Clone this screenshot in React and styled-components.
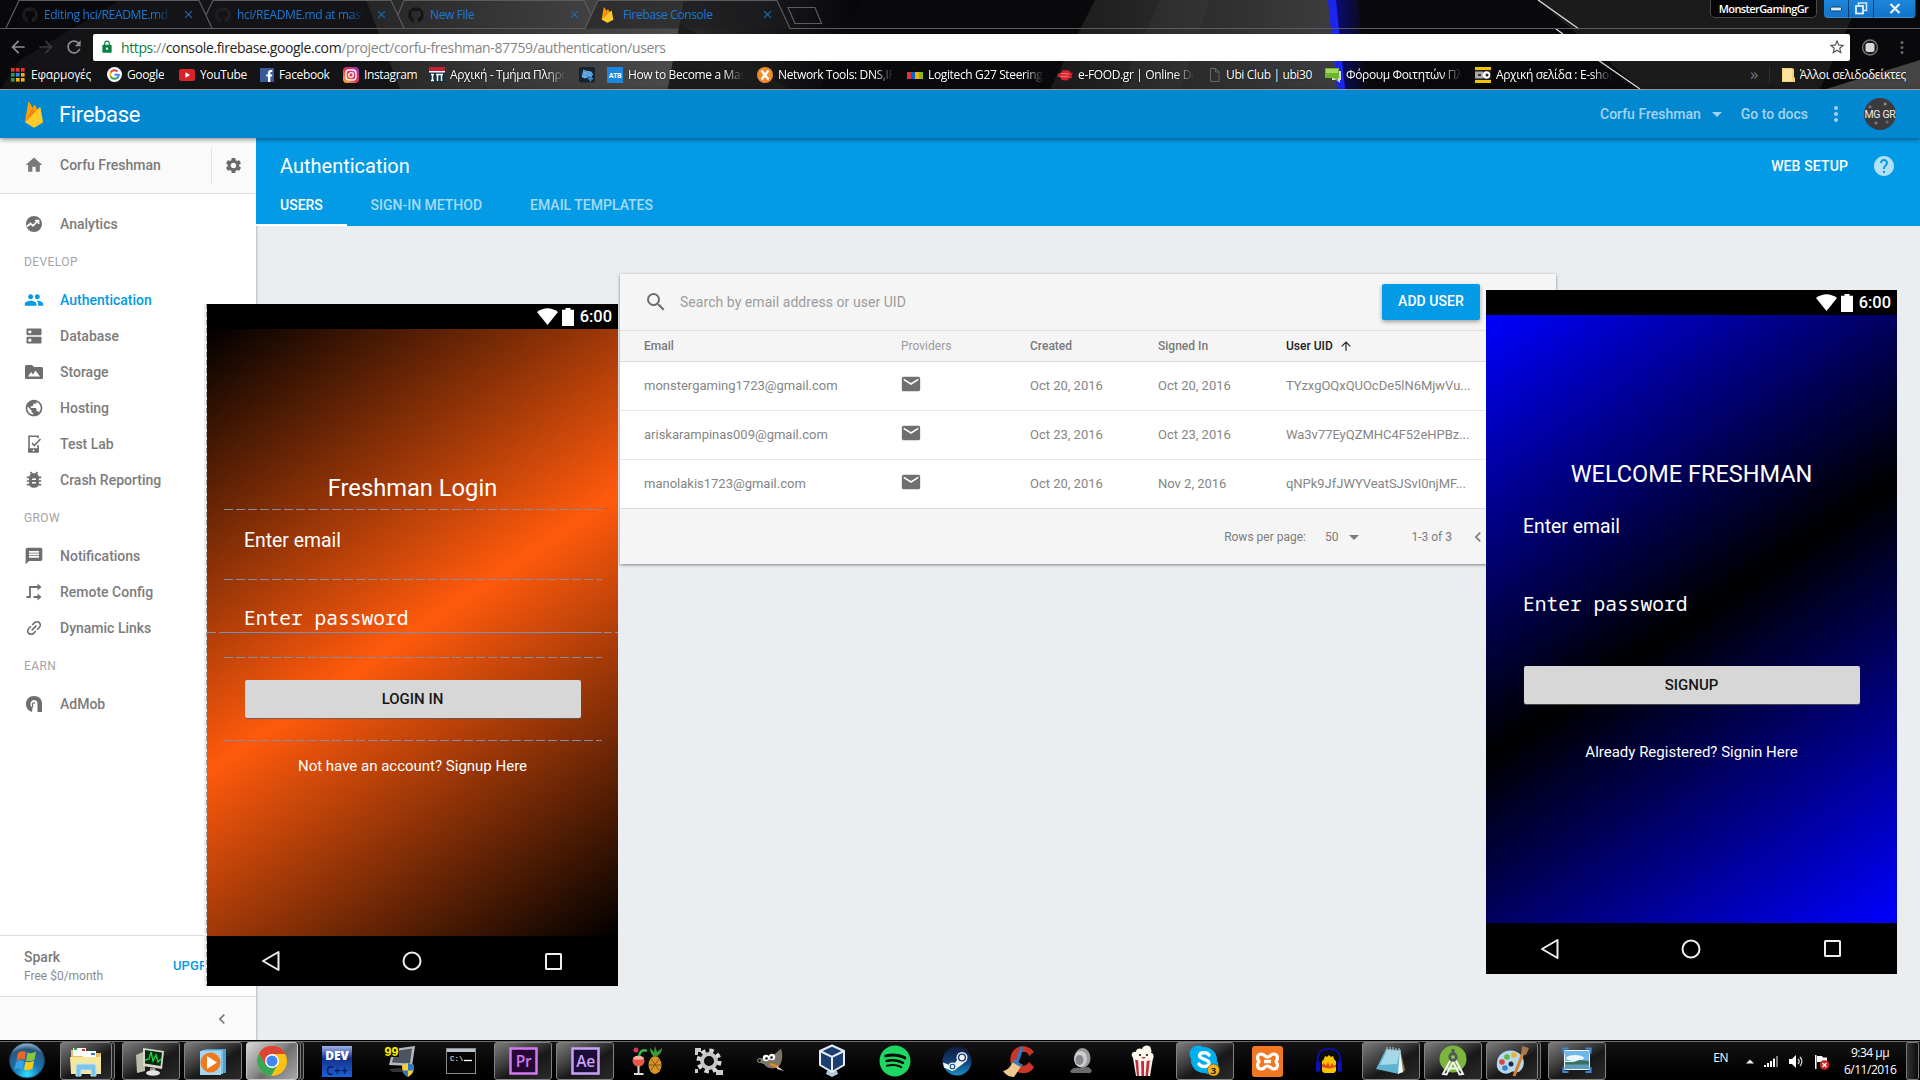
import React from 'react';
import styled, { createGlobalStyle, css } from 'styled-components';
import { FaGithub, FaSpotify } from 'react-icons/fa';
import {
  MdHome, MdSettings, MdPeople, MdDns, MdPublic, MdMessage, MdSearch, MdMail,
  MdHelp, MdArrowUpward, MdMoreVert, MdChevronLeft, MdArrowDropDown, MdStarBorder,
  MdArrowBack, MdArrowForward, MdRefresh, MdLock, MdLink, MdClose,
} from 'react-icons/md';

const GlobalStyle = createGlobalStyle`
  * { box-sizing: border-box; }
  body { margin: 0; background: #000; }
  svg { display: block; flex: none; }
`;

const chromeFont = '"Open Sans", "Noto Sans", sans-serif';

const Desktop = styled.div`
  position: relative;
  width: 1920px;
  height: 1080px;
  overflow: hidden;
  display: flex;
  flex-direction: column;
  font-family: Roboto, sans-serif;
`;

/* ---------- browser chrome ---------- */

const Browser = styled.header`
  position: relative;
  height: 90px;
  flex: none;
  display: flex;
  flex-direction: column;
  background: #09090c;
  border-bottom: 1px solid #b4b0a8;
  font-family: ${chromeFont};
`;
const ThemeArt = styled.svg`
  position: absolute;
  inset: 0;
`;
const TabStrip = styled.div`
  position: relative;
  height: 29px;
  display: flex;
  padding-left: 11px;
`;
const Tab = styled.div`
  width: 193px;
  flex: none;
  display: flex;
  align-items: center;
  padding: 0 9px 0 11px;
`;
const TabTitle = styled.span`
  flex: 1;
  margin-left: 6px;
  overflow: hidden;
  white-space: nowrap;
  font-size: 12px;
  letter-spacing: -0.36px;
  color: #1b78d6;
  ${p => p.$fade && css`
    mask-image: linear-gradient(90deg, #000 88%, transparent);
  `}
`;
const TabClose = styled(MdClose)`
  color: #1c6cb4;
  font-size: 13px;
  margin-left: 11px;
`;
const TabIcon = styled.span`
  width: 16px;
  height: 16px;
  color: ${p => p.$color};
  opacity: ${p => p.$dim ? 0.7 : 1};
`;
const WindowButtons = styled.div`
  margin-left: auto;
  display: flex;
  align-items: flex-start;
  padding-right: 4px;
`;
const ProfileChip = styled.div`
  width: 107px;
  height: 18px;
  margin-right: 7px;
  border: 1px solid #4a4a4c;
  border-top: 0;
  border-radius: 0 0 5px 5px;
  background: #050507;
  color: #fff;
  text-align: center;
  font-size: 11px;
  line-height: 17px;
  font-weight: 600;
  letter-spacing: -0.6px;
`;
const WinButton = styled.div`
  width: ${p => p.$w}px;
  height: 18px;
  display: flex;
  align-items: center;
  justify-content: center;
  background: linear-gradient(#1c86dc, #1274c8);
  border-right: 1px solid #0b3f70;
  border-bottom: 1px solid #3a8fd6;
  border-radius: ${p => p.$radius || 0};
`;
const Toolbar = styled.div`
  position: relative;
  height: 31px;
  display: flex;
  align-items: center;
  padding: 5px 10px 0 8px;
`;
const NavIcon = styled.span`
  width: 28px;
  color: ${p => p.$dim ? '#38383b' : '#8e8e90'};
  font-size: 20px;
`;
const Omnibox = styled.div`
  width: 1758px;
  height: 27px;
  margin-left: 1px;
  display: flex;
  align-items: center;
  padding: 0 4px 0 7px;
  background: #fff;
  border-radius: 2px;
  color: #0b8043;
`;
const Url = styled.span`
  margin-left: 7px;
  font-size: 14px;
  letter-spacing: -0.37px;
  color: #868686;
  white-space: nowrap;
  flex: 1;
`;
const UrlPart = styled.span`
  color: ${p => p.$color};
`;
const BookmarkBar = styled.div`
  position: relative;
  height: 29px;
  flex: none;
  display: flex;
  align-items: center;
  padding: 0 14px 0 10px;
`;
const Bookmark = styled.div`
  width: ${p => p.$w}px;
  display: flex;
  align-items: center;
  gap: 5px;
  color: #fff;
  font-size: 12px;
  letter-spacing: ${p => p.$ls ?? -0.36}px;
  white-space: nowrap;
`;
const BookmarkLabel = styled.span`
  max-width: 117px;
  overflow: hidden;
  text-shadow: 0 0 2px #000;
  ${p => p.$fade && css`
    mask-image: linear-gradient(90deg, #000 82%, transparent 99%);
  `}
`;
const Overflow = styled.span`
  margin-left: auto;
  color: #77777a;
  font-size: 17px;
  line-height: 16px;
  padding-right: 10px;
  padding-bottom: 2px;
`;
const BarDivider = styled.span`
  width: 1px;
  height: 16px;
  background: #333336;
  margin-right: 12px;
`;

/* ---------- firebase console ---------- */

const Console = styled.main`
  height: 950px;
  flex: none;
  display: flex;
  flex-direction: column;
  background: #eaeef1;
`;
const AppBar = styled.div`
  position: relative;
  z-index: 1;
  height: 48px;
  flex: none;
  display: flex;
  align-items: center;
  padding: 0 24px;
  background: #0288d1;
  box-shadow: 0 1px 5px rgba(0, 0, 0, 0.5);
`;
const Brand = styled.div`
  margin-left: 15px;
  font-size: 22px;
  letter-spacing: -0.35px;
  color: #fff;
`;
const AppBarRight = styled.div`
  margin-left: auto;
  display: flex;
  align-items: center;
  color: #a3d3ee;
  font-size: 14px;
  font-weight: 500;
`;
const ProjectMenu = styled.span`
  display: flex;
  align-items: center;
  gap: 4px;
`;
const Docs = styled.span`
  margin: 0 16px 0 12px;
`;
const Avatar = styled.div`
  width: 32px;
  height: 32px;
  margin: 0 0 0 16px;
  border-radius: 50%;
  display: flex;
  align-items: center;
  justify-content: center;
  color: #eee;
  font-size: 10.5px;
  font-weight: 400;
  letter-spacing: -0.3px;
  white-space: nowrap;
  background:
    radial-gradient(circle at 6px 9px, #777 1px, transparent 2px),
    radial-gradient(circle at 21px 6px, #888 1px, transparent 2px),
    radial-gradient(circle at 12px 25px, #777 1px, transparent 2px),
    radial-gradient(circle at 23px 24px, #666 1px, transparent 2px),
    #3b3b3e;
`;
const Body = styled.div`
  flex: 1;
  display: flex;
  min-height: 0;
`;
const Sidebar = styled.nav`
  width: 256px;
  flex: none;
  display: flex;
  flex-direction: column;
  background: #fff;
  box-shadow: 1px 0 2px rgba(0, 0, 0, 0.22);
  color: #7a7a7a;
  font-size: 14px;
`;
const ProjectRow = styled.div`
  height: 56px;
  flex: none;
  display: flex;
  align-items: center;
  padding: 0 0 1px 24px;
  background: #fafafa;
  border-bottom: 1px solid #dcdcdc;
  font-weight: 500;
`;
const ProjectName = styled.span`
  margin-left: 16px;
  flex: 1;
`;
const GearBox = styled.div`
  width: 45px;
  height: 35px;
  border-left: 1px solid #e2e2e2;
  display: flex;
  align-items: center;
  justify-content: center;
  padding-right: 1px;
  color: #6a6a6a;
`;
const NavList = styled.div`
  flex: 1;
  padding-top: 11.5px;
`;
const NavItem = styled.div`
  height: 36px;
  padding-left: 24px;
  display: flex;
  align-items: center;
  gap: 16px;
  font-weight: 500;
  color: ${p => p.$active ? '#039be5' : '#7c7c7c'};
  svg { color: ${p => p.$active ? '#039be5' : '#6e6e6e'}; }
`;
const NavHeading = styled.div`
  height: 40px;
  padding-left: 24px;
  display: flex;
  align-items: center;
  font-size: 12px;
  letter-spacing: 0.4px;
  color: #a4a4a4;
`;
const Plan = styled.div`
  height: 61px;
  border-top: 1px solid #dedede;
  display: flex;
  align-items: center;
  padding: 1px 24px 0 24px;
`;
const PlanInfo = styled.div`
  flex: 1;
  font-weight: 500;
  line-height: 19px;
`;
const PlanPrice = styled.div`
  font-size: 12px;
  font-weight: 400;
  color: #8a8a8a;
`;
const Upgrade = styled.span`
  padding-bottom: 2px;
  font-size: 13px;
  font-weight: 500;
  letter-spacing: 0.1px;
  color: #039be5;
`;
const Collapse = styled.div`
  height: 44px;
  border-top: 1px solid #dedede;
  background: #fafafa;
  display: flex;
  align-items: center;
  justify-content: flex-end;
  padding-right: 24px;
`;
const Content = styled.section`
  flex: 1;
  display: flex;
  flex-direction: column;
`;
const PageHeader = styled.div`
  height: 88px;
  flex: none;
  background: #039be5;
  color: #fff;
  display: flex;
  flex-direction: column;
`;
const TitleRow = styled.div`
  height: 56px;
  display: flex;
  align-items: center;
  padding: 0 24px;
  font-size: 20px;
`;
const WebSetup = styled.span`
  margin: 0 24px 0 auto;
  padding-bottom: 1px;
  font-size: 14px;
  font-weight: 500;
  letter-spacing: 0.13px;
`;
const PageTabs = styled.div`
  flex: 1;
  display: flex;
  font-size: 14px;
  font-weight: 500;
`;
const PageTab = styled.div`
  padding: 3px 24px 0;
  ${p => p.$active && 'width: 90.5px;'}
  line-height: 16px;
  border-bottom: ${p => p.$active ? '2px solid #fff' : '0'};
  color: ${p => p.$active ? '#fff' : '#a5daf5'};
`;
const Card = styled.div`
  width: 936px;
  margin: 48px 0 0 364px;
  background: #f5f5f5;
  box-shadow: 0 1px 3px rgba(0, 0, 0, 0.45);
  font-size: 12px;
  color: #757575;
`;
const SearchRow = styled.div`
  height: 57px;
  display: flex;
  align-items: center;
  padding: 0 76px 0 24px;
  border-bottom: 1px solid #e0e0e0;
  font-size: 14px;
  letter-spacing: 0.05px;
  color: #9c9c9c;
`;
const SearchHint = styled.span`
  margin: -1px 0 0 12px;
  flex: 1;
`;
const AddUser = styled.div`
  width: 98px;
  height: 36px;
  display: flex;
  align-items: center;
  justify-content: center;
  padding-bottom: 2px;
  border-radius: 2px;
  background: #039be5;
  color: #fff;
  font-weight: 500;
  box-shadow: 0 2px 4px rgba(0, 0, 0, 0.35);
`;
const TableRow = styled.div`
  display: grid;
  grid-template-columns: 257px 129px 128px 128px 1fr;
  align-items: center;
  padding: 0 0 ${p => p.$head ? 0 : 2}px 24px;
  height: ${p => p.$head ? 31 : 49}px;
  border-bottom: 1px solid ${p => p.$last || p.$head ? '#dadada' : '#e8e8e8'};
  background: ${p => p.$head ? '#f5f5f5' : '#fff'};
  font-size: ${p => p.$head ? 12 : 13}px;
  font-weight: ${p => p.$head ? 500 : 400};
  color: ${p => p.$head ? '#7a7a7a' : '#858585'};
`;
const Cell = styled.span`
  display: flex;
  align-items: center;
  gap: 6px;
  color: ${p => p.$color || 'inherit'};
  font-weight: ${p => p.$light ? 400 : 'inherit'};
  letter-spacing: ${p => p.$ls || 0}px;
`;
const Pager = styled.div`
  height: 55px;
  display: flex;
  align-items: center;
  justify-content: flex-end;
  padding: 1px 68px 0 0;
  color: #7c7c7c;
`;
const PagerText = styled.span`
  margin-right: ${p => p.$gap}px;
`;
const RowsCaret = styled(MdArrowDropDown)`
  margin-right: 45px;
`;
const MailIcon = styled(MdMail)`
  color: #6f6f6f;
  margin: -2px 0 0 -1px;
`;

/* ---------- phone previews ---------- */

const Phone = styled.div`
  position: absolute;
  left: ${p => p.$x}px;
  top: ${p => p.$y}px;
  z-index: 2;
  width: 411px;
  display: flex;
  flex-direction: column;
  background: #000;
  color: #fff;
  ${p => p.$edge && css`
    &::before {
      content: '';
      position: absolute;
      left: -3px;
      top: 0;
      bottom: 0;
      width: 3px;
      background:
        repeating-linear-gradient(180deg, #9fa5ab 0 5px, transparent 5px 8px) right / 1px 100% no-repeat,
        #eceeef;
    }
  `}
`;
const StatusBar = styled.div`
  height: 25px;
  display: flex;
  align-items: center;
  justify-content: flex-end;
  gap: 4px;
  padding-right: 6px;
  font-size: 16.4px;
  font-weight: 500;
`;
const StatusTime = styled.span`
  margin-left: 2px;
`;
const Screen = styled.div`
  position: relative;
  height: ${p => p.$h}px;
  display: flex;
  flex-direction: column;
  align-items: center;
  padding: 145px 37px 0;
  background: linear-gradient(145.9deg, ${p => p.$colors});
`;
const ScreenTitle = styled.div`
  font-size: ${p => p.$size}px;
  line-height: 28px;
`;
const FieldHint = styled.div`
  align-self: flex-start;
  margin-top: ${p => p.$mt}px;
  font-size: 19.4px;
  line-height: 24px;
  ${p => p.$mono && css`
    font-family: "Noto Sans Mono", "DejaVu Sans Mono", monospace;
    font-size: 19.6px;
  `}
`;
const PhoneButton = styled.div`
  width: 336px;
  height: 38px;
  margin-top: 50px;
  display: flex;
  align-items: center;
  justify-content: center;
  border-radius: 2px;
  background: #d6d7d6;
  box-shadow: 0 1px 1px rgba(90, 90, 90, 0.8);
  color: #161616;
  font-size: 15px;
  font-weight: 500;
`;
const PhoneLink = styled.div`
  margin-top: 38px;
  font-size: 15px;
  line-height: 20px;
`;
const Guide = styled.div`
  position: absolute;
  left: ${p => p.$full ? 0 : 17}px;
  right: ${p => p.$full ? 0 : 16}px;
  top: ${p => p.$y}px;
  height: 1px;
  background: ${p => p.$full
    ? 'linear-gradient(90deg, #7d93ab 9px, transparent 9px 12px, #6f93bb 12px 395px, transparent 395px 397px, #7d93ab 397px 405px, transparent 405px 408px, #7d93ab 408px)'
    : 'repeating-linear-gradient(90deg, #8a8c98 0 9px, transparent 9px 12px)'};
`;
const AndroidNav = styled.div`
  height: ${p => p.$h}px;
  display: flex;
  align-items: center;
  justify-content: space-between;
  padding: 0 55px 0 54px;
`;

/* ---------- taskbar ---------- */

const Taskbar = styled.footer`
  height: 40px;
  flex: none;
  display: flex;
  padding: 0 1px 0 0;
  background: linear-gradient(#141416, #030303 70%, #000);
  border-top: 1px solid #000;
  box-shadow: inset 0 1px 0 #6c6c6c;
  color: #fff;
  font-family: ${chromeFont};
`;
const StartArea = styled.div`
  width: 60px;
  display: flex;
  align-items: center;
  padding-left: 8px;
`;
const Slot = styled.div`
  width: 62px;
  display: flex;
  padding-top: 1px;
`;
const TaskButton = styled.div`
  width: ${p => p.$stack ? 52 : 58}px;
  height: 38px;
  display: flex;
  align-items: center;
  justify-content: center;
  ${p => p.$open && css`
    border: 1px solid ${p.$active ? '#c9c9c9' : '#828282'};
    border-radius: 3px;
    background: ${p.$active
      ? 'linear-gradient(135deg, #d8d8d8, #8a8a8a 45%, #6f6f6f 55%, #a8a8a8)'
      : 'linear-gradient(150deg, #7c7c7c 0%, #3d3d3d 38%, #181818 58%, #2a2a2a 100%)'};
  `}
`;
const StackEdge = styled.div`
  width: 3px;
  height: 38px;
  border: 1px solid #777;
  border-left: 0;
  border-radius: 0 3px 3px 0;
  background: #222;
`;
const Tray = styled.div`
  margin-left: auto;
  display: flex;
  align-items: center;
  font-size: 12px;
  letter-spacing: -0.5px;
`;
const Lang = styled.span`
  margin: -6px 18px 0 0;
`;
const TrayIcons = styled.span`
  display: flex;
  align-items: center;
  gap: 10px;
  padding-top: 2px;
`;
const Clock = styled.div`
  width: 52px;
  margin: 1px 10px 0 14px;
  text-align: center;
  line-height: 17px;
  white-space: nowrap;
`;
const ShowDesktop = styled.div`
  width: 13px;
  height: 38px;
  margin-top: 1px;
  border: 1px solid #777;
  border-radius: 2px;
  background: linear-gradient(90deg, #333, #0c0c0c);
`;

/* ---------- drawings ---------- */

const Flame = ({ w, h }) => (
  <svg width={w} height={h} viewBox="0 0 20 27" preserveAspectRatio="none">
    <path d="M1 21 4.2 1.2c.1-.6.8-.7 1.1-.2L8.600 7 10 4.300c.3-.5 1-.5 1.200 0L19 21z" fill="#ffa000" />
    <path d="M12 13 8.600 7 1 21z" fill="#f57f17" />
    <path d="M19 21.500 16.600 6.800c-.1-.5-.7-.7-1.100-.3L1 21.200l8 5c.6.400 1.400.400 2 0z" fill="#ffca28" />
  </svg>
);

const GoogleG = () => (
  <svg width="15" height="15" viewBox="0 0 30 30">
    <circle cx="15" cy="15" r="15" fill="#fff" />
    <g fill="none" strokeWidth="4">
      <path d="M21 9a8.500 8.500 0 0 0-13.600 2" stroke="#ea4335" />
      <path d="M7.400 11a9 9 0 0 0 0 8" stroke="#fbbc05" />
      <path d="M7.400 19a8.500 8.500 0 0 0 13.200 2.500" stroke="#34a853" />
      <path d="M15 15.500h8.500c0 3-1 4.800-2.900 6.300" stroke="#4285f4" />
    </g>
  </svg>
);

const bookmarkIcons = {
  apps: (
    <svg width="16" height="14" viewBox="0 0 16 14">
      {['#e33', '#e33', '#e33', '#2b9a4b', '#3b86f0', '#f5b400', '#2b9a4b', '#f5b400', '#f5b400'].map((c, i) => (
        <rect key={i} x={1 + (i % 3) * 5} y={Math.floor(i / 3) * 5} width="3.600" height="3.600" fill={c} />
      ))}
    </svg>
  ),
  google: <GoogleG />,
  youtube: (
    <svg width="16" height="14" viewBox="0 0 16 14"><rect y="1" width="16" height="12" rx="2.500" fill="#d8232a" /><path d="M6.500 4.300v5.400L11 7z" fill="#fff" /></svg>
  ),
  facebook: (
    <svg width="14" height="14" viewBox="0 0 14 14"><rect width="14" height="14" fill="#3b5998" /><path d="M8 14V8.500H6.200V6.400H8V5c0-2 1-3 2.800-3h1.500v2.100h-1c-.8 0-1 .4-1 1.100v1.200h2l-.3 2.100h-1.700V14z" fill="#fff" /></svg>
  ),
  instagram: (
    <svg width="16" height="16" viewBox="0 0 16 16">
      <defs><linearGradient id="ig" x1="0" y1="1" x2="1" y2="0"><stop offset="0" stopColor="#fdc042" /><stop offset=".5" stopColor="#e5304f" /><stop offset="1" stopColor="#8b3bc4" /></linearGradient></defs>
      <rect width="16" height="16" rx="4" fill="url(#ig)" />
      <rect x="3" y="3" width="10" height="10" rx="3" fill="none" stroke="#fff" strokeWidth="1.300" />
      <circle cx="8" cy="8" r="2.300" fill="none" stroke="#fff" strokeWidth="1.300" /><circle cx="11" cy="5" r=".7" fill="#fff" />
    </svg>
  ),
  dept: (
    <svg width="16" height="15" viewBox="0 0 16 15"><rect width="16" height="15" fill="#123243" /><rect width="16" height="4" fill="#c62033" /><rect y="4" width="16" height="1.500" fill="#fff" /><path d="M2 7.500h3M2 13.500h3M3.500 7v7M7 7.500h7M8.500 7.500V14M12.500 7.500V14" stroke="#fff" strokeWidth="1.500" /></svg>
  ),
  cube: (
    <svg width="16" height="16" viewBox="0 0 16 16"><rect width="16" height="15.500" rx="2" fill="#16222c" /><path d="M4.500 2.500l3 1.200 4.500.8 2 2.500-1.500 3.500-2.500-.5-4 1.500-3.500-1.500 1-3.500z" fill="#69aee6" /><path d="M2.500 6.500l9 3.500M4 3l9 5" stroke="#3c7fb8" strokeWidth=".8" /><path d="M11.500 9v5.500M8.800 11.800h5.400" stroke="#3f92d8" strokeWidth="1.600" /></svg>
  ),
  atb: (
    <svg width="16" height="16" viewBox="0 0 16 16"><rect width="16" height="16" fill="#1a86de" /><text x="8" y="10.800" textAnchor="middle" fontFamily="Open Sans" fontWeight="700" fontSize="7" fill="#fff" letterSpacing="-.3">ATB</text></svg>
  ),
  network: (
    <svg width="16" height="16" viewBox="0 0 16 16"><circle cx="8" cy="8" r="8" fill="#f08c28" /><path d="M4.500 3.500l7 9M11.500 3.500l-7 9" stroke="#fff" strokeWidth="2.400" /></svg>
  ),
  logitech: (
    <svg width="16" height="16" viewBox="0 0 16 16"><path d="M4.500 4a3 3 0 0 1 6 0" stroke="#111" fill="none" strokeWidth="1.500" /><rect y="5" width="4" height="7" fill="#e53238" /><rect x="4" y="5" width="4" height="7" fill="#0064d2" /><rect x="8" y="5" width="4" height="7" fill="#f5af02" /><rect x="12" y="5" width="4" height="7" fill="#86b817" /></svg>
  ),
  efood: (
    <svg width="16" height="16" viewBox="0 0 16 16"><path d="M0 9l2-3 1.500.5L6 3l6 .5 2 2.500 2-.5-1.500 3L15 11l-3 .5-2 2-5-.5-2-2.500z" fill="#d8232f" /><path d="M4 6.500l8 .5M3.500 9.500l8 .3" stroke="#f08a90" strokeWidth=".9" /></svg>
  ),
  page: (
    <svg width="12" height="14" viewBox="0 0 12 14"><path d="M1.500.5h5l3.500 3.500v9.500h-8.500zM6.500.5v3.500H10" fill="none" stroke="#666" /></svg>
  ),
  forum: (
    <svg width="16" height="16" viewBox="0 0 16 16"><path d="M7 4h9v9h-1v3l-3-3H7z" fill="#d8d8d0" /><path d="M0 1h14v10H13v4l-4-4H0z" fill="#6eb52c" /><path d="M1 2h12v4H1z" fill="#a4d862" /></svg>
  ),
  eshop: (
    <svg width="16" height="16" viewBox="0 0 16 16"><rect width="16" height="3" fill="#f2c500" /><rect y="13" width="16" height="3" fill="#f2c500" /><rect y="3" width="16" height="10" fill="#222" /><path d="M0 4.500h8v7H0z" fill="#a8a8a8" /><path d="M3 7h3v2H3z" fill="#333" /><circle cx="11.500" cy="8" r="3.800" fill="#fff" /><circle cx="12" cy="8" r="1.500" fill="#222" /></svg>
  ),
  folder: (
    <svg width="13" height="15" viewBox="0 0 13 15"><path d="M0 1h10l2 1v8l1 1v4H0z" fill="#f4d27a" /><path d="M1 2h9v12H1z" fill="#fbe39b" /></svg>
  ),
};

const bookmarks = [
  ['apps', 'Εφαρμογές', 97, 0, -0.22], ['google', 'Google', 72], ['youtube', 'YouTube', 81], ['facebook', 'Facebook', 83],
  ['instagram', 'Instagram', 86], ['dept', 'Αρχική - Τμήμα Πληροφορικής', 150, 1], ['cube', '', 28],
  ['atb', 'How to Become a Master', 150, 1], ['network', 'Network Tools: DNS,IP,Email', 150, 1],
  ['logitech', 'Logitech G27 Steering Wheel', 150, 1], ['efood', 'e-FOOD.gr | Online Delivery', 152, 1],
  ['page', 'Ubi Club | ubi30', 116], ['forum', 'Φόρουμ Φοιτητών Πληροφ.', 150, 1], ['eshop', 'Αρχική σελίδα : E-shop.gr', 150, 1],
];

const AnalyticsIcon = () => (
  <svg width="20" height="20" viewBox="0 0 20 20"><circle cx="10" cy="10" r="8" fill="currentColor" /><path d="M3 12.500l3.500-3 2.500 2.300L13.500 7M11 6.500h3.500V10" fill="none" stroke="#fff" strokeWidth="1.700" /></svg>
);
const StorageIcon = () => (
  <svg width="20" height="20" viewBox="0 0 20 20"><path d="M2.600 3H8l2 2h7.400c.9 0 1.600.7 1.600 1.600v8.800c0 .9-.7 1.600-1.600 1.600H2.600C1.700 17 1 16.300 1 15.400V4.600C1 3.700 1.700 3 2.600 3z" fill="currentColor" /><path d="M4 14.500l3-4.500 2 2.500 2.500-4 4.500 6z" fill="#fff" /></svg>
);
const TestLabIcon = () => (
  <svg width="20" height="20" viewBox="0 0 20 20" fill="none" stroke="currentColor" strokeWidth="1.600"><path d="M14 4V2.300H5V17h9v-6" /><path d="M5 15h9v3H5z" fill="currentColor" /><path d="M8 9l2.300 2.500L16.500 5" /><circle cx="9.500" cy="16.500" r=".9" fill="#fff" stroke="none" /></svg>
);
const CrashIcon = () => (
  <svg width="20" height="20" viewBox="0 0 20 20" fill="none" stroke="currentColor" strokeWidth="1.700"><path d="M6 7.500c0-2.500 1.500-3.500 4-3.500s4 1 4 3.500V13c0 2.500-1.500 4-4 4s-4-1.500-4-4z" fill="currentColor" /><path d="M2.800 7.300h14.400M2.800 11h14.400M2.800 14.700h14.400M6.500 2l2 2.300M13.500 2l-2 2.300" /><path d="M8 9.200h4M8 12.700h4" stroke="#fff" strokeWidth="1.400" /></svg>
);
const RemoteIcon = () => (
  <svg width="20" height="20" viewBox="0 0 20 20"><path d="M2.500 15H6V5h9M9.500 15H15" fill="none" stroke="currentColor" strokeWidth="1.800" /><path d="M13.500 1.500 17.500 5l-4 3.500zM13.500 11.500l4 3.500-4 3.500z" fill="currentColor" /></svg>
);
const LinksIcon = styled(MdLink)`
  transform: rotate(-45deg);
`;
const AdmobIcon = () => (
  <svg width="20" height="20" viewBox="0 0 20 20"><path d="M10 2c4.800 0 8 3 8 7.500V18h-4.500v-8c0-2.500-1.200-4-3.300-4C7.800 6 6.500 7.800 6.500 10c0 1.800.8 3 2 3.700L8 17.800C4.300 17 2 14 2 10c0-4.700 3.300-8 8-8z" fill="currentColor" /><path d="M8.500 13.500V10c0-1.600 2.200-1.600 2.200-.2" fill="none" stroke="currentColor" strokeWidth="1.200" /></svg>
);

const sections = [
  { items: [['Analytics', <AnalyticsIcon />]] },
  {
    title: 'DEVELOP',
    items: [
      ['Authentication', <MdPeople size={20} />, true], ['Database', <MdDns size={20} />], ['Storage', <StorageIcon />],
      ['Hosting', <MdPublic size={20} />], ['Test Lab', <TestLabIcon />], ['Crash Reporting', <CrashIcon />],
    ],
  },
  { title: 'GROW', items: [['Notifications', <MdMessage size={20} />], ['Remote Config', <RemoteIcon />], ['Dynamic Links', <LinksIcon size={20} />]] },
  { title: 'EARN', items: [['AdMob', <AdmobIcon />]] },
];

const users = [
  ['monstergaming1723@gmail.com', 'Oct 20, 2016', 'Oct 20, 2016', 'TYzxgOQxQUOcDe5lN6MjwVu...'],
  ['ariskarampinas009@gmail.com', 'Oct 23, 2016', 'Oct 23, 2016', 'Wa3v77EyQZMHC4F52eHPBz...'],
  ['manolakis1723@gmail.com', 'Oct 20, 2016', 'Nov 2, 2016', 'qNPk9JfJWYVeatSJSvI0njMF...'],
];

const AdobeIcon = ({ label, color, bg }) => (
  <svg width="29" height="28" viewBox="0 0 29 28"><rect x="1.500" y="1.500" width="26" height="25" fill={bg} stroke={color} strokeWidth="2.500" /><text x="14.500" y="19.500" textAnchor="middle" fontFamily="Open Sans" fontWeight="600" fontSize="15.500" letterSpacing="-.4" fill={color}>{label}</text></svg>
);

const taskIcons = {
  explorer: <svg width="34" height="32" viewBox="0 0 34 32"><path d="M2 5h8l2 3h20v21H2z" fill="#dfc267" /><path d="M4 3h13v8H4zM14 6h13v7H14z" fill="#fff" /><path d="M5 3h3v2H5z" fill="#2aa84a" /><path d="M13 4h3v2h-3z" fill="#d33" /><path d="M22 8h4v2h-4z" fill="#2e78d0" /><path d="M1 12h29l2-2v19H2z" fill="#f5e7a0" /><path d="M7 31V22c0-2 1-3 3-3h14c2 0 3 1 3 3v9h-5v-6H12v6z" fill="#7cc4ea" stroke="#bfe5f8" /></svg>,
  monitor: <svg width="34" height="32" viewBox="0 0 34 32"><path d="M2 10l9-4v20l-8 2z" fill="#bcbcae" /><path d="M9 3l21 3-2 18-19-3z" fill="#d8d8cc" /><path d="M11 5l17 2.500-1.500 13.500-15.500-2.500z" fill="#062a0c" /><path d="M11 15l4-1 2-7 2 9 3-6 2 7 3-3" fill="none" stroke="#20d040" strokeWidth="1.400" /><path d="M16 23h5l1 4h-6z" fill="#999" /><ellipse cx="19" cy="28" rx="7" ry="2.800" fill="#e4e4e4" /></svg>,
  wmp: <svg width="30" height="30" viewBox="0 0 30 30"><rect x="7" y="3" width="21" height="24" fill="#4e9fd0" /><rect x="4" y="4" width="21" height="24" fill="#7fc0e6" /><rect x="2" y="5" width="21" height="24" fill="#a9d6ef" /><circle cx="12.500" cy="16.500" r="10" fill="#ee7a1c" /><path d="M9 10v13l10-6.500z" fill="#fff" /></svg>,
  chrome: <svg width="30" height="30" viewBox="0 0 30 30"><circle cx="15" cy="15" r="15" fill="#fbc116" /><path d="M2 7.500A15 15 0 0 1 28 7.500H15z" fill="#db4437" /><path d="M2 7.500A15 15 0 0 0 14 30l7-11.500-12.500-.500z" fill="#3aa757" /><path d="M15 8h13.200A15 15 0 0 0 2 7.500L8.500 19z" fill="#db4437" /><circle cx="15" cy="15" r="7" fill="#fff" /><circle cx="15" cy="15" r="5.500" fill="#4285f4" /></svg>,
  dev: <svg width="30" height="31" viewBox="0 0 30 31"><defs><linearGradient id="dv" x1="0" y1="0" x2="0" y2="1"><stop offset="0" stopColor="#9fb4ea" /><stop offset=".4" stopColor="#15308c" /><stop offset="1" stopColor="#1e62d8" /></linearGradient></defs><rect width="30" height="31" fill="url(#dv)" /><text x="15" y="14" textAnchor="middle" fontFamily="Open Sans" fontWeight="800" fontSize="12" fill="#fff">DEV</text><text x="15" y="28.500" textAnchor="middle" fontFamily="Open Sans" fontWeight="600" fontSize="12.500" fill="#041a5c">C++</text></svg>,
  counter: <svg width="34" height="34" viewBox="0 0 34 34"><path d="M11 5l22-3-3 20-23-1z" fill="#b5b9bd" /><path d="M13 7l17-2.500-2 15-18-1z" fill="#4b5560" /><rect x="2" y="2" width="15" height="11" fill="#161600" /><text x="9.500" y="12" textAnchor="middle" fontFamily="Liberation Sans" fontWeight="700" fontSize="12.500" fill="#ffee00">99</text><path d="M7 25l12-1 2 4H10z" fill="#333" /><path d="M20 21l6-2 6 2c0 6-1 9-6 12-5-3-6-6-6-12z" fill="#f4cf3a" /><path d="M26 19l6 2c0 2 0 4-.6 5.500H26zM20.600 26.500H26V33c-3.500-2-5-4-5.400-6.500z" fill="#2e78c8" /></svg>,
  cmd: <svg width="30" height="26" viewBox="0 0 30 26"><rect x=".5" y=".5" width="29" height="25" fill="#050505" stroke="#8c8c8c" /><rect x="1" y="1" width="28" height="3" fill="#b8c4d0" /><text x="4" y="13" fontFamily="Liberation Mono" fontSize="7.500" fill="#fff">C:\</text><path d="M18 12.500h8" stroke="#fff" strokeWidth="1.300" /></svg>,
  pr: <AdobeIcon label="Pr" color="#d47af0" bg="#260633" />,
  ae: <AdobeIcon label="Ae" color="#c9a2f5" bg="#1b0d38" />,
  drink: <svg width="32" height="32" viewBox="0 0 32 32"><ellipse cx="7.500" cy="16" rx="6" ry="5.500" fill="#e9564a" /><path d="M2 13c3-3 8-3 11 0l-1 1.500H3z" fill="#f7b0a0" /><path d="M6.500 21h2v7h4v2H3v-2h3.500z" fill="#ddd" /><circle cx="5" cy="5" r="2.500" fill="#d8355a" /><path d="M8 11c1-5 4-7 8-5" stroke="#39b54a" strokeWidth="2.500" fill="none" /><ellipse cx="24" cy="20" rx="6.500" ry="9" fill="#d8952a" /><path d="M20 14l8 11M28 14l-8 11M18 20h12" stroke="#8d5310" /><path d="M24 12c-4-2-5-6-5-9l4 4 1-6 2 6 5-4c0 4-2 7-7 9z" fill="#3c9b37" /></svg>,
  gear: <svg width="28" height="28" viewBox="0 0 28 28"><path d="M0 1h6v4H0zM0 5h3v3H0zM21 23h7v5h-7zM0 22h3v4H0z" fill="#ccc" /><circle cx="14" cy="14" r="10" fill="none" stroke="#d9d9d9" strokeWidth="5" strokeDasharray="4.200 3.650" /><circle cx="14" cy="14" r="7" fill="none" stroke="#c6c6c6" strokeWidth="4" /><circle cx="14" cy="14" r="3.500" fill="#111" /></svg>,
  gimp: <svg width="30" height="26" viewBox="0 0 30 26"><path d="M3 11c5-1 7-4 10-3 5 1 7-4 12-7 2 4 2 14-3 18-5 3-12 1-14-3-2 0-5-2-5-5z" fill="#7b7568" /><circle cx="10" cy="10" r="3.200" fill="#fff" /><circle cx="16" cy="9" r="3.200" fill="#fff" /><circle cx="10.500" cy="10.500" r="1.300" fill="#111" /><circle cx="15.500" cy="9.500" r="1.300" fill="#111" /><circle cx="3.500" cy="12.500" r="2" fill="#111" stroke="#ccc" strokeWidth=".7" /><path d="M14 16l8 3" stroke="#e08a2a" strokeWidth="2.500" /><path d="M21 18l7 5-7-2z" fill="#ddd" /></svg>,
  vbox: <svg width="30" height="34" viewBox="0 0 30 34"><path d="M9 27h10l1 3-6 3-6-3z" fill="#b9c6dc" /><path d="M14 1.500l12 5.500v14L14 28 2 21V7z" fill="#1c3f72" stroke="#e4ecf8" strokeWidth="2" strokeLinejoin="round" /><path d="M2 7l12 6 12-6M14 13v14" stroke="#e4ecf8" strokeWidth="2" fill="none" /></svg>,
  spotify: <FaSpotify size={32} color="#1ed760" />,
  steam: <svg width="30" height="30" viewBox="0 0 30 30"><defs><linearGradient id="stm" x1="0" y1="0" x2="0" y2="1"><stop offset="0" stopColor="#101c3c" /><stop offset=".5" stopColor="#123a70" /><stop offset="1" stopColor="#1b8ec8" /></linearGradient></defs><circle cx="15" cy="15" r="14.500" fill="url(#stm)" /><path d="M1 16.500l9 3.500 7-8 5 5-8 6-4 2-8-3.500z" fill="#f2f5f8" /><circle cx="10.500" cy="20.500" r="4" fill="#f2f5f8" /><circle cx="10.500" cy="20.500" r="2.300" fill="none" stroke="#1a4f88" strokeWidth="1.100" /><circle cx="20" cy="11.500" r="5.500" fill="#f2f5f8" /><circle cx="20" cy="11.500" r="3.400" fill="#f2f5f8" stroke="#15396e" strokeWidth="1.400" /></svg>,
  ccleaner: <svg width="32" height="34" viewBox="0 0 32 34"><path d="M31 8C25 0 12 0 8 11c-3 10 4 19 13 18 4 0 8-2 10-6l-5-5c-3 5-9 5-11 0-2-6 2-11 7-10 2 0 3 1 4 4z" fill="#cf3527" /><path d="M19 3l-5 15" stroke="#3678b8" strokeWidth="3.500" /><path d="M11 16l8 5-8 12c-5 0-9-3-11-6 5-1 8-5 11-11z" fill="#eec88c" /><path d="M10 17l9 5" stroke="#3678b8" strokeWidth="3" /></svg>,
  webcam: <svg width="26" height="28" viewBox="0 0 26 28"><path d="M2 25c1-4 6-5 10-4l8-1c4 2 5 5 2 6H4z" fill="#6c6c6e" /><ellipse cx="14.500" cy="11" rx="8" ry="10" fill="#9b9b9e" /><ellipse cx="12.500" cy="12" rx="6.500" ry="8" fill="#cdcdcf" /><ellipse cx="11.500" cy="13" rx="4" ry="5" fill="#88888c" /></svg>,
  popcorn: <svg width="26" height="32" viewBox="0 0 26 32"><path d="M3 13h20l-3 18H6z" fill="#f4f0ea" /><path d="M5 13h3l1 18H7zM11 13h3v18h-2.500zM17 13h3l-2 18h-2.500z" fill="#c22d3a" /><path d="M3 13c-3-4 0-7 3-6 0-4 4-4 6-3 1-4 8-5 9 0 1 3 0 4 0 4 3 0 3 4 2 6-4 3-16 3-20-1z" fill="#fff8ea" /><circle cx="10" cy="10" r="1.100" fill="#111" /><circle cx="17" cy="10" r="1.100" fill="#111" /><path d="M11.500 12c1 2 3.500 2 4 0z" fill="#c22d3a" /></svg>,
  skype: <svg width="32" height="32" viewBox="0 0 32 32"><circle cx="9" cy="9" r="8.500" fill="#00aff0" /><circle cx="15" cy="15" r="13" fill="#00aff0" /><circle cx="21" cy="21" r="8.500" fill="#00aff0" /><path d="M20 10c-2-3-9-3-9.500.5C10 15 20.500 13 20 18.500c-.5 4-8 4-10 .5" fill="none" stroke="#fff" strokeWidth="3.400" strokeLinecap="round" /><circle cx="24.500" cy="25" r="6" fill="#f5b21c" stroke="#6b4a00" strokeWidth=".6" /><text x="24.500" y="28.500" textAnchor="middle" fontFamily="Open Sans" fontWeight="700" fontSize="9.500" fill="#222">3</text></svg>,
  xampp: <svg width="31" height="31" viewBox="0 0 31 31"><rect width="31" height="31" rx="3" fill="#f37623" /><path d="M9.500 8c3 0 3 3 6 3s3-3 6-3 4 2 4 4-1.500 3-1.500 3.500S25.500 17 25.500 19s-1 4-4 4-3-3-6-3-3 3-6 3-4-2-4-4 1.500-3 1.500-3.500S5.500 14 5.500 12s1-4 4-4z" fill="none" stroke="#fff" strokeWidth="3.200" /><path d="M12 15.500h7" stroke="#fff" strokeWidth="3.500" /></svg>,
  audacity: <svg width="28" height="28" viewBox="0 0 28 28"><path d="M3 17C1 4 8 2 14 2s13 2 11 15" fill="none" stroke="#0c10a8" strokeWidth="2" /><path d="M7 14l1.500-1 1.500-4 2 1 2-2 2 2 2-1 1.500 4 1.500 1v10l-2 2H9l-2-2z" fill="#f7c500" /><path d="M7 18l2-2 2 3 2-4 2 5 2-4 2 3 2-2v3l-7 1.500-7-1.500z" fill="#e8431c" /><rect x="1" y="14" width="4.500" height="11" rx="2.200" fill="#0c10b8" /><rect x="22.500" y="14" width="4.500" height="11" rx="2.200" fill="#0c10b8" /></svg>,
  notepad: <svg width="32" height="32" viewBox="0 0 32 32"><path d="M25 4l5 21-3 3-5-22z" fill="#9c7c3a" /><path d="M11 4l15 1-2 24L1 24z" fill="#5fb3cf" /><path d="M12 5l13 1-3 13-17 1z" fill="#a5d9e8" /><path d="M25 5l3 22-5 2z" fill="#eef6fa" /><path d="M12 2v4M15 2v4M18 2v4M21 3v4M24 3v4" stroke="#ccc" /></svg>,
  android: <svg width="28" height="32" viewBox="0 0 28 32"><circle cx="14" cy="14" r="13.500" fill="#7cb63c" /><path d="M12 14L4 29l3.500.500L14 17l6.500 12.500L24 29l-8-15M8.500 23.500h11" fill="none" stroke="#f2f2f2" strokeWidth="2" /><circle cx="14" cy="12" r="4.700" fill="#4f5b56" /><path d="M12.500 4h3v6h-3z" fill="#4f5b56" /><circle cx="14" cy="12" r="1.800" fill="#9ccc65" /></svg>,
  paint: <svg width="34" height="32" viewBox="0 0 34 32"><path d="M2 17C3 8 13 3 22 7c8 4 9 14 3 19-3 3-6-1-9 1-4 4-16 1-14-10z" fill="#b6d9ee" /><circle cx="7" cy="17" r="2.800" fill="#d9443c" /><circle cx="12" cy="12" r="2.800" fill="#63b548" /><circle cx="19" cy="10" r="2.800" fill="#eab22c" /><circle cx="10" cy="23" r="2.800" fill="#3c7fd0" /><circle cx="16" cy="19" r="2.500" fill="#1c2c3c" /><path d="M19 31L28 8" stroke="#d9822b" strokeWidth="3" /><path d="M26 9l1-8 7 2-3 7z" fill="#a8764c" /></svg>,
  picture: <svg width="30" height="28" viewBox="0 0 30 28"><rect x="2" y="3" width="26" height="20" fill="#eef6fb" /><rect x="3" y="4" width="24" height="10" fill="#6fb6ea" /><ellipse cx="13" cy="11" rx="9" ry="3" fill="#eaf6fc" /><path d="M3 15l8 0 7-2 9 1v5H3z" fill="#3d6f60" /><path d="M3 17.500h24V22H3z" fill="#5f9cb8" /><path d="M1.500 6.500v-5h5M23.500 1.500h5v5M28.500 20v5h-5M6.500 25h-5v-5" fill="none" stroke="#3f86d0" strokeWidth="2.200" /></svg>,
};

const tasks = [
  ['explorer', { open: 1, stack: 1 }], ['monitor', { open: 1 }], ['wmp', { open: 1 }], ['chrome', { open: 1, stack: 2, active: 1 }],
  ['dev'], ['counter'], ['cmd'], ['pr', { open: 1 }], ['ae', { open: 1 }], ['drink'], ['gear'], ['gimp'], ['vbox'], ['spotify'],
  ['steam'], ['ccleaner'], ['webcam'], ['popcorn'], ['skype', { open: 1 }], ['xampp'], ['audacity'], ['notepad', { open: 1 }],
  ['android', { open: 1 }], ['paint', { open: 1, stack: 1 }], ['picture', { open: 1 }],
];

const StartOrb = () => (
  <svg width="38" height="37" viewBox="0 0 38 37">
    <defs><radialGradient id="orb" cx=".5" cy=".9" r=".9"><stop offset="0" stopColor="#2fe0ff" /><stop offset=".4" stopColor="#1678b4" /><stop offset=".8" stopColor="#2c567e" /><stop offset="1" stopColor="#9fc0d8" /></radialGradient></defs>
    <circle cx="19" cy="18.500" r="17.500" fill="url(#orb)" stroke="#163a5a" />
    <path d="M10 11c3-2 5-2 8-1l-1.500 8c-3-1-5-1-8 1z" fill="#f0642c" />
    <path d="M19.500 10.500c3 1 5 1 8.500-1l-1.500 8c-3 2-5.500 2-8.500 1z" fill="#8cc63e" />
    <path d="M8 20c3-2 5-2 8-1l-1.500 8c-3-1-5-1-8 1z" fill="#3aa0e8" />
    <path d="M17.500 19.500c3 1 5.500 1 8.500-1l-1.500 8c-3 2-5.500 2-8.500 1z" fill="#fcc81c" />
  </svg>
);

const BrowserArt = () => (
  <ThemeArt width="1920" height="89" viewBox="0 0 1920 89">
    <defs>
      <linearGradient id="g1" x1="0" x2="1" y1="0" y2="0"><stop offset="0" stopColor="#262627" /><stop offset="1" stopColor="#4c4c4d" /></linearGradient>
      <linearGradient id="g2" x1="0" x2="1" y1="0" y2="0"><stop offset="0" stopColor="#2c2c2e" /><stop offset="1" stopColor="#060608" /></linearGradient>
      <linearGradient id="g3" x1="0" x2="1" y1="0" y2="0"><stop offset="0" stopColor="#1a1a1b" /><stop offset="1" stopColor="#3e3e40" /></linearGradient>
      <linearGradient id="g4" x1="0" x2="1" y1="0" y2="0"><stop offset="0" stopColor="#0a0a90" /><stop offset="1" stopColor="#0b0b0e" /></linearGradient>
    </defs>
    <path d="M120 0H370L400 89H0L20 60z" fill="#141416" />
    <path d="M366 0H684L668 89H400z" fill="url(#g1)" />
    <path d="M684 0H860L820 89H668z" fill="url(#g2)" />
    <path d="M680 24l110 65H668z" fill="#1c1c1d" />
    <path d="M1095 0H1330L1343 89H1050z" fill="url(#g3)" />
    <path d="M1160 0h50l-30 89h-60z" fill="#fff" opacity=".03" />
    <path d="M1328 0h30l8 89h-24z" fill="url(#g4)" />
    <path d="M1328 0h8l9 89h-8z" fill="#1a26f0" />
    <path d="M1538 0H1860L1820 89H1640z" fill="#1b1b1c" />
    <path d="M1920 60V89H1826z" fill="#444445" />
    <path d="M1538 0l41 29M1556 29l7 5M1598 60l42 29" stroke="#d6d6d6" strokeWidth="1.400" />
    <path d="M598 0L585 28.500H790L777 0z" fill="#1d1d1f" opacity=".55" />
    <g fill="none" stroke="#5c5c5e" strokeWidth="1.200">
      <path d="M0 28.500H585L598 .5H777L790 28.500H1920" />
      <path d="M6 28L19 .5H199L212 28M206 15L213 .5H391L404 28M398 15L404 .5H584L591 15" />
      <path d="M788 7.500H815L821.500 23.500H795z" />
    </g>
  </ThemeArt>
);

const PhoneStatus = () => (
  <StatusBar>
    <svg width="21" height="17" viewBox="0 0 21 17"><path d="M0 4Q10.500-3.500 21 4L10.500 17z" fill="#fff" /></svg>
    <svg width="12" height="18" viewBox="0 0 12 18"><path d="M0 1.800h3.500V0h5v1.800H12V18H0z" fill="#fff" /></svg>
    <StatusTime>6:00</StatusTime>
  </StatusBar>
);

const PhoneNav = ({ h }) => (
  <AndroidNav $h={h}>
    <svg width="19" height="22" viewBox="0 0 19 22"><path d="M17.500 2v18L2 11z" fill="none" stroke="#eee" strokeWidth="2" strokeLinejoin="round" /></svg>
    <svg width="20" height="20" viewBox="0 0 20 20"><circle cx="10" cy="10" r="8.500" fill="none" stroke="#eee" strokeWidth="2" /></svg>
    <svg width="19" height="19" viewBox="0 0 19 19"><rect x="2" y="2" width="15" height="15" rx=".5" fill="none" stroke="#eee" strokeWidth="2" /></svg>
  </AndroidNav>
);

const tabs = [
  ['Editing hci/README.md at master', 'github', true], ['hci/README.md at master', 'github', true],
  ['New File', 'github'], ['Firebase Console', 'firebase'],
];

export default function App() {
  return (
    <Desktop>
      <GlobalStyle />
      <Browser>
        <BrowserArt />
        <TabStrip>
          {tabs.map(([title, icon, fade], i) => (
            <Tab key={title}>
              <TabIcon $color={i === 2 ? '#141414' : '#262628'} $dim={i < 2}>
                {icon === 'github' ? <FaGithub size={16} /> : <Flame w={13} h={16} />}
              </TabIcon>
              <TabTitle $fade={fade}>{title}</TabTitle>
              <TabClose />
            </Tab>
          ))}
          <WindowButtons>
            <ProfileChip>MonsterGamingGr</ProfileChip>
            <WinButton $w={25} $radius="0 0 0 4px"><svg width="12" height="6" viewBox="0 0 12 6"><rect x=".5" y="1" width="11" height="4" rx="1" fill="#d8ecfb" stroke="#0c3c6c" /></svg></WinButton>
            <WinButton $w={25}><svg width="14" height="13" viewBox="0 0 14 13" fill="none"><path d="M4.500 3V1H12.500V8.500H10" stroke="#cfe6f8" strokeWidth="1.600" /><rect x="2" y="4" width="7" height="7.500" stroke="#e4f2fc" strokeWidth="1.800" /></svg></WinButton>
            <WinButton $w={42} $radius="0 0 4px 0"><svg width="12" height="11" viewBox="0 0 12 11"><path d="M1.500 1l9 9M10.500 1l-9 9" stroke="#e4f2fc" strokeWidth="2.200" /></svg></WinButton>
          </WindowButtons>
        </TabStrip>
        <Toolbar>
          <NavIcon><MdArrowBack /></NavIcon>
          <NavIcon $dim><MdArrowForward /></NavIcon>
          <NavIcon><MdRefresh /></NavIcon>
          <Omnibox>
            <MdLock size={14} />
            <Url>
              <UrlPart $color="#0b8043">https</UrlPart>://<UrlPart $color="#1e1e1e">console.firebase.google.com</UrlPart>/project/corfu-freshman-87759/authentication/users
            </Url>
            <MdStarBorder size={18} color="#555" />
          </Omnibox>
          <svg width="60" height="17" viewBox="-1 0 60 17">
            <circle cx="19" cy="8.500" r="7.500" fill="#1b1b1c" stroke="#777" strokeWidth="1.300" />
            <rect x="14.500" y="4" width="9" height="9" rx="2.500" fill="#d8d8d8" />
            <g fill="#666"><circle cx="51" cy="3.500" r="1.500" /><circle cx="51" cy="8.500" r="1.500" /><circle cx="51" cy="13.500" r="1.500" /></g>
          </svg>
        </Toolbar>
        <BookmarkBar>
          {bookmarks.map(([icon, label, w, fade, ls]) => (
            <Bookmark key={icon} $w={w} $ls={ls}>
              {bookmarkIcons[icon]}
              {label && <BookmarkLabel $fade={fade}>{label}</BookmarkLabel>}
            </Bookmark>
          ))}
          <Overflow>»</Overflow>
          <BarDivider />
          <Bookmark>
            {bookmarkIcons.folder}
            <BookmarkLabel>Άλλοι σελιδοδείκτες</BookmarkLabel>
          </Bookmark>
        </BookmarkBar>
      </Browser>

      <Console>
        <AppBar>
          <Flame w={20} h={27} />
          <Brand>Firebase</Brand>
          <AppBarRight>
            <ProjectMenu>Corfu Freshman<MdArrowDropDown size={24} /></ProjectMenu>
            <Docs>Go to docs</Docs>
            <MdMoreVert size={24} />
            <Avatar>MG GR</Avatar>
          </AppBarRight>
        </AppBar>
        <Body>
          <Sidebar>
            <ProjectRow>
              <MdHome size={20} />
              <ProjectName>Corfu Freshman</ProjectName>
              <GearBox><MdSettings size={19} /></GearBox>
            </ProjectRow>
            <NavList>
              {sections.map((s, i) => (
                <React.Fragment key={i}>
                  {s.title && <NavHeading>{s.title}</NavHeading>}
                  {s.items.map(([name, icon, active]) => (
                    <NavItem key={name} $active={active}>{icon}{name}</NavItem>
                  ))}
                </React.Fragment>
              ))}
            </NavList>
            <Plan>
              <PlanInfo>Spark<PlanPrice>Free $0/month</PlanPrice></PlanInfo>
              <Upgrade>UPGRADE</Upgrade>
            </Plan>
            <Collapse><MdChevronLeft size={20} /></Collapse>
          </Sidebar>
          <Content>
            <PageHeader>
              <TitleRow>
                Authentication
                <WebSetup>WEB SETUP</WebSetup>
                <MdHelp size={24} color="#b3e0f7" />
              </TitleRow>
              <PageTabs>
                <PageTab $active>USERS</PageTab>
                <PageTab>SIGN-IN METHOD</PageTab>
                <PageTab>EMAIL TEMPLATES</PageTab>
              </PageTabs>
            </PageHeader>
            <Card>
              <SearchRow>
                <MdSearch size={24} color="#6e6e6e" />
                <SearchHint>Search by email address or user UID</SearchHint>
                <AddUser>ADD USER</AddUser>
              </SearchRow>
              <TableRow $head>
                <Cell>Email</Cell>
                <Cell $color="#9c9c9c" $light>Providers</Cell>
                <Cell>Created</Cell>
                <Cell>Signed In</Cell>
                <Cell $color="#212121">User UID <MdArrowUpward size={14} /></Cell>
              </TableRow>
              {users.map(([email, created, signed, uid], i) => (
                <TableRow key={email} $last={i === 2}>
                  <Cell>{email}</Cell>
                  <Cell><MailIcon size={22} /></Cell>
                  <Cell>{created}</Cell>
                  <Cell>{signed}</Cell>
                  <Cell $ls={-0.03}>{uid}</Cell>
                </TableRow>
              ))}
              <Pager>
                <PagerText $gap={19}>Rows per page:</PagerText>
                <PagerText $gap={4}>50</PagerText>
                <RowsCaret size={24} />
                <PagerText $gap={16}>1-3 of 3</PagerText>
                <MdChevronLeft size={20} />
              </Pager>
            </Card>
          </Content>
        </Body>
      </Console>

      <Phone $x={207} $y={304} $edge>
        <PhoneStatus />
        <Screen $h={607} $colors="#000, #ff5a0c, #000">
          <ScreenTitle $size={23.7}>Freshman Login</ScreenTitle>
          <FieldHint $mt={27}>Enter email</FieldHint>
          <FieldHint $mt={53} $mono>Enter password</FieldHint>
          <PhoneButton>LOGIN IN</PhoneButton>
          <PhoneLink>Not have an account? Signup Here</PhoneLink>
          <Guide $y={180} />
          <Guide $y={250} />
          <Guide $y={303} $full />
          <Guide $y={328} />
          <Guide $y={411} />
        </Screen>
        <PhoneNav h={50} />
      </Phone>

      <Phone $x={1486} $y={290}>
        <PhoneStatus />
        <Screen $h={608} $colors="#0000ff, #000, #0000ff">
          <ScreenTitle $size={23.5}>WELCOME FRESHMAN</ScreenTitle>
          <FieldHint $mt={27}>Enter email</FieldHint>
          <FieldHint $mt={53} $mono>Enter password</FieldHint>
          <PhoneButton>SIGNUP</PhoneButton>
          <PhoneLink>Already Registered? Signin Here</PhoneLink>
        </Screen>
        <PhoneNav h={51} />
      </Phone>

      <Taskbar>
        <StartArea><StartOrb /></StartArea>
        {tasks.map(([name, o = {}]) => (
          <Slot key={name}>
            <TaskButton $open={o.open} $stack={o.stack} $active={o.active}>{taskIcons[name]}</TaskButton>
            {o.stack && <StackEdge />}
            {o.stack === 2 && <StackEdge />}
          </Slot>
        ))}
        <Tray>
          <Lang>EN</Lang>
          <TrayIcons>
            <svg width="8" height="5" viewBox="0 0 8 5"><path d="M0 4.500L4 .5l4 4z" fill="#eee" /></svg>
            <svg width="15" height="13" viewBox="0 0 15 13" fill="#fff"><path d="M0 10h2v2H0zM3 8h2v4H3zM6 6h2v6H6zM9 3.500h2V12H9z" /><path d="M12 1h2v11h-2z" fill="#777" /></svg>
            <svg width="15" height="15" viewBox="0 0 15 15"><path d="M0 5h3l4-4v13L3 10H0z" fill="#fff" /><path d="M9 5c1.500 1.500 1.500 3.500 0 5M11 3c2.500 3 2.500 6 0 9" fill="none" stroke="#ddd" strokeWidth="1.200" /></svg>
            <svg width="16" height="16" viewBox="0 0 16 16"><path d="M1 1h1.500v14H1zM3 2h5l1 1.500h4V9H8L7 8H3z" fill="#fff" /><circle cx="10.500" cy="11" r="4.800" fill="#d0211c" /><path d="M8.500 9l4 4M12.500 9l-4 4" stroke="#fff" strokeWidth="1.500" /></svg>
          </TrayIcons>
          <Clock>9:34 μμ<br />6/11/2016</Clock>
          <ShowDesktop />
        </Tray>
      </Taskbar>
    </Desktop>
  );
}
